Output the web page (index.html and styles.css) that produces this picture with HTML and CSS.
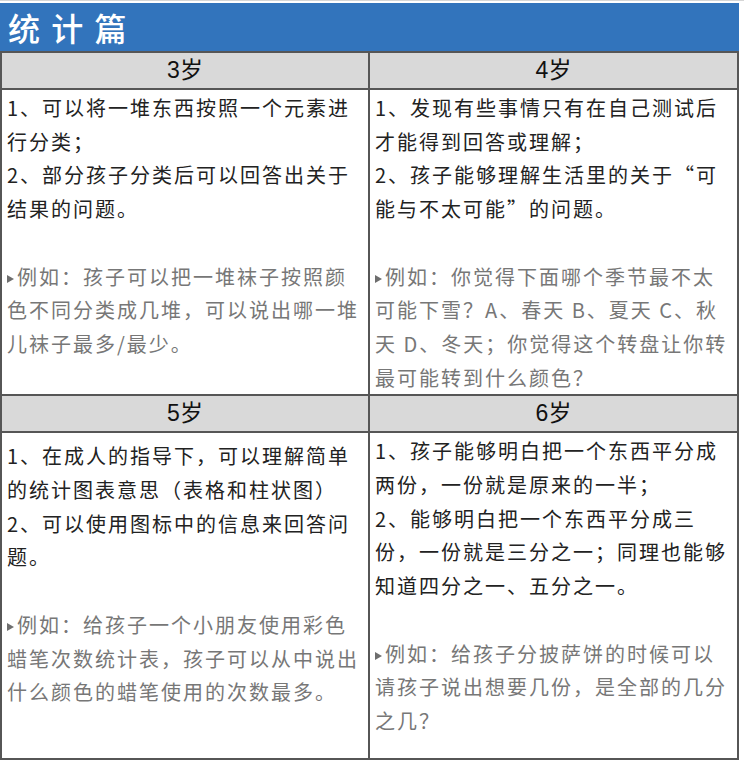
FILE: index.html
```html
<!DOCTYPE html>
<html lang="zh-CN">
<head>
<meta charset="utf-8">
<title>统计篇</title>
<link rel="stylesheet" href="styles.css">
</head>
<body>
<div class="page">
  <div class="sheet">
    <div class="title">统 计 篇</div>
    <div class="grid">
      <div class="age">3岁</div>
      <div class="age">4岁</div>
      <div class="cell">
        <p class="main">1、可以将一堆东西按照一个元素进行分类；<br>2、部分孩子分类后可以回答出关于结果的问题。</p>
        <p class="example">例如：孩子可以把一堆袜子按照颜色不同分类成几堆，可以说出哪一堆儿袜子最多/最少。</p>
      </div>
      <div class="cell">
        <p class="main">1、发现有些事情只有在自己测试后才能得到回答或理解；<br>2、孩子能够理解生活里的关于“可能与不太可能”的问题。</p>
        <p class="example">例如：你觉得下面哪个季节最不太可能下雪？A、春天 B、夏天 C、秋天 D、冬天；你觉得这个转盘让你转最可能转到什么颜色？</p>
      </div>
      <div class="age">5岁</div>
      <div class="age">6岁</div>
      <div class="cell cell-low">
        <p class="main">1、在成人的指导下，可以理解简单的统计图表意思（表格和柱状图）<br>2、可以使用图标中的信息来回答问题。</p>
        <p class="example">例如：给孩子一个小朋友使用彩色蜡笔次数统计表，孩子可以从中说出什么颜色的蜡笔使用的次数最多。</p>
      </div>
      <div class="cell cell-last">
        <p class="main">1、孩子能够明白把一个东西平分成两份，一份就是原来的一半；<br>2、能够明白把一个东西平分成三份，一份就是三分之一；同理也能够知道四分之一、五分之一。</p>
        <p class="example">例如：给孩子分披萨饼的时候可以请孩子说出想要几份，是全部的几分之几？</p>
      </div>
    </div>
  </div>
</div>
</body>
</html>
```
FILE: styles.css
```css
html, body {
  margin: 0;
  padding: 0;
  background: #ffffff;
}

.page {
  width: 744px;
  height: 760px;
  border-top: 1px solid #d6d6d6;
  padding-top: 2px;
  box-sizing: border-box;
  font-family: "Noto Sans CJK SC", sans-serif;
}

.sheet {
  width: 739px;
}

.title {
  height: 48px;
  line-height: 48px;
  background: #3274bc;
  color: #ffffff;
  font-family: "Noto Sans CJK SC", sans-serif;
  font-size: 32px;
  font-weight: 500;
  letter-spacing: 2px;
  padding-left: 8px;
  white-space: pre;
}

.grid {
  display: grid;
  grid-template-columns: 366px 367px;
  gap: 2px;
  padding: 2px;
  background: #565656;
}

.age {
  height: 35px;
  line-height: 35px;
  background: #d9d9d9;
  color: #111111;
  text-align: center;
  font-family: "Liberation Sans", "Noto Sans CJK SC", sans-serif;
  font-size: 23px;
}

.cell {
  background: #ffffff;
  padding: 1px 3px 0 5px;
  font-size: 20px;
  letter-spacing: 2px;
  line-height: 33.7px;
}

.cell p {
  margin: 0;
}

.main {
  color: #222222;
}

.example {
  color: #777777;
  margin-top: 33.7px !important;
}

.example::before {
  content: "";
  display: inline-block;
  width: 0;
  height: 0;
  border-left: 7px solid #6e6e6e;
  border-top: 4.5px solid transparent;
  border-bottom: 4.5px solid transparent;
  margin-right: 3px;
  vertical-align: 2px;
}

.cell-low {
  padding-top: 6px;
}

.cell-last {
  padding-bottom: 20px;
}
```
